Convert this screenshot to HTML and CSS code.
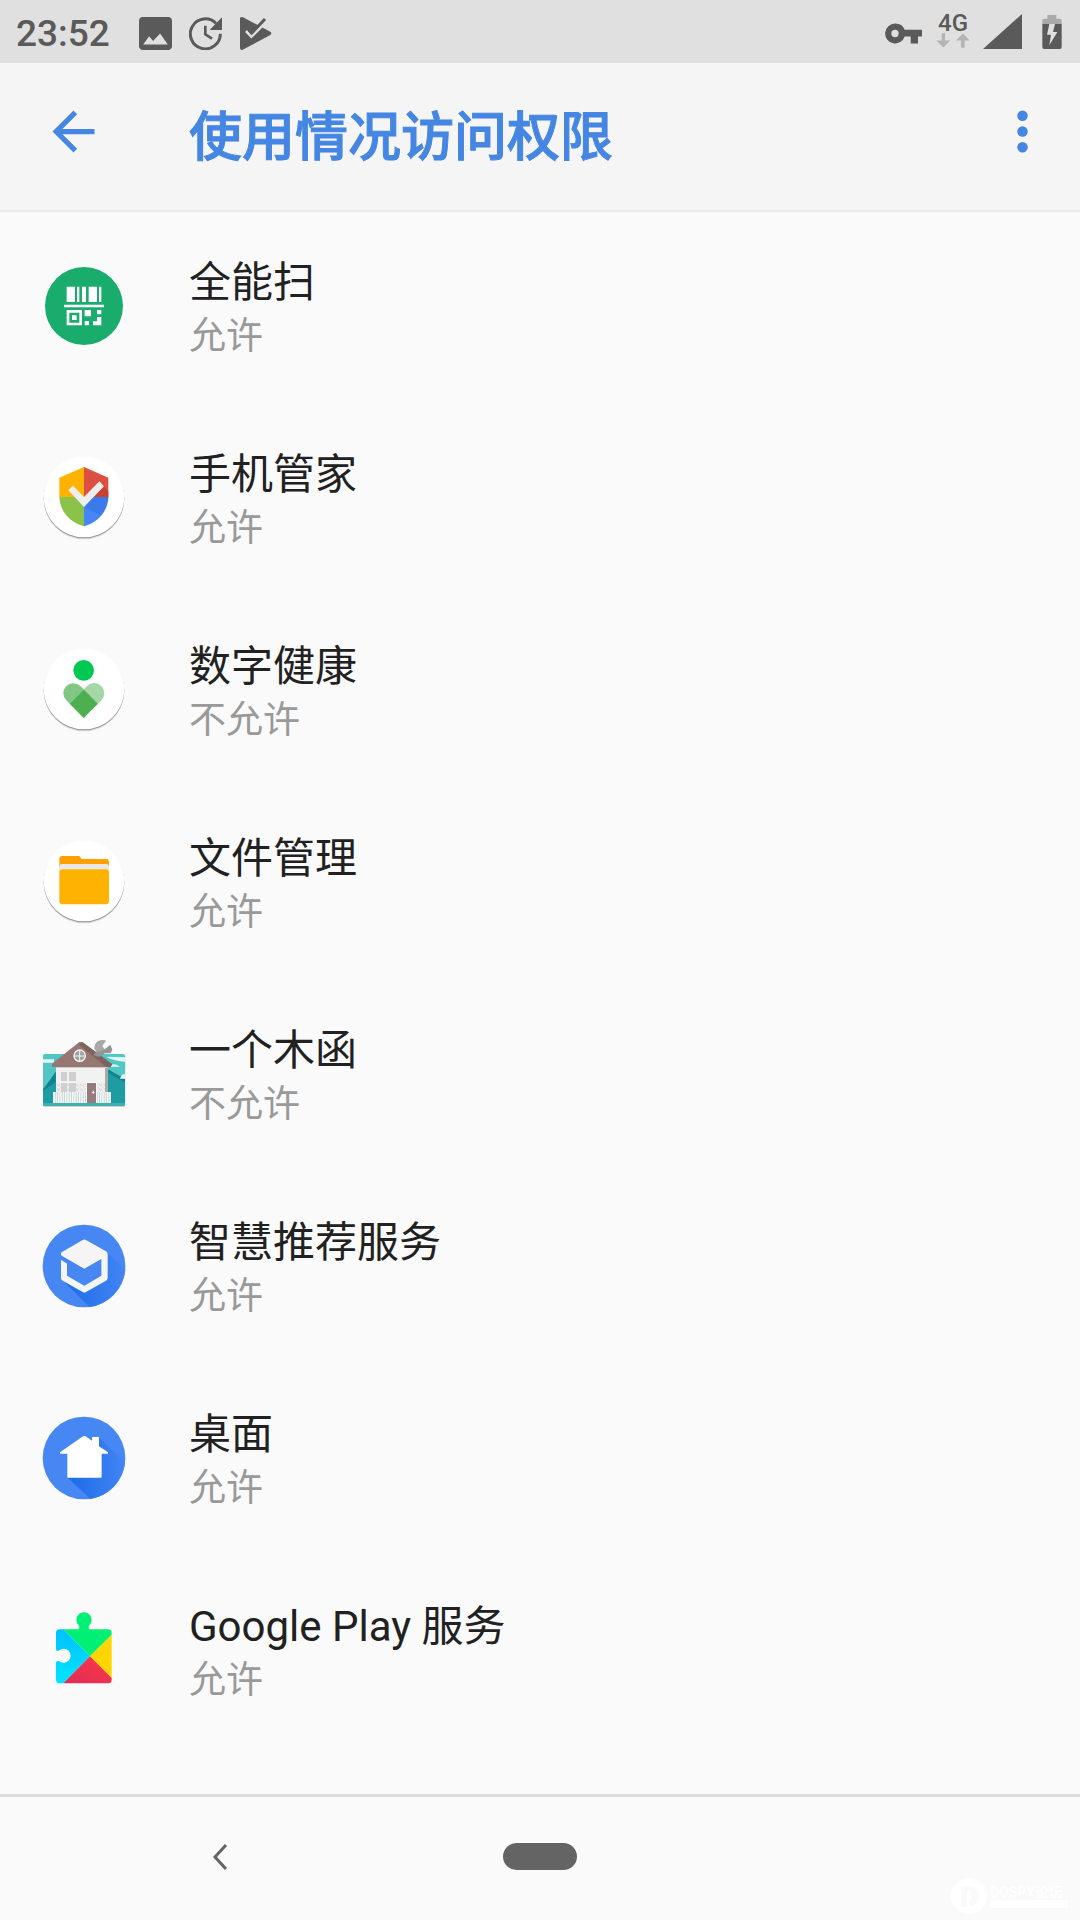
FILE: index.html
```html
<!DOCTYPE html>
<html lang="zh-CN">
<head>
    <meta charset="UTF-8">
    <meta name="viewport" content="width=device-width, initial-scale=1">
    <title>使用情况访问权限</title>
    <link rel="stylesheet" href="styles.css">
</head>
<body>

<div class="status-bar">
    <span class="clock">23:52</span>
    <svg class="status-icon" viewBox="3 3 18 18"><path d="M21 19V5c0-1.100-.9-2-2-2H5c-1.100 0-2 .9-2 2v14c0 1.100.9 2 2 2h14c1.100 0 2-.9 2-2zM5.300 18l3.200-4.500 2.200 2.600 3.800-4.100 4.200 6z"/></svg>
    <svg class="status-icon" viewBox="567 51 99 99"><path d="M648 70A45 45 0 1 0 661 101" fill="none" stroke="#5a5a5a" stroke-width="9"/><path d="M666 52v38h-37z"/><path d="M616 77v26l20 13" fill="none" stroke="#5a5a5a" stroke-width="8"/></svg>
    <svg class="status-icon" viewBox="720 51 99 99"><path d="M723 57q0-9 9-5l82 43q6 5 0 10l-80 43q-11 5-11-5z"/><path d="M741 93l16 17 50-50" fill="none" stroke="#e0e0e0" stroke-width="8"/><path d="M749 89l9 10 40-42" fill="none" stroke="#5a5a5a" stroke-width="9"/></svg>

    <svg class="key" viewBox="75 62 111 62"><path fill-rule="evenodd" d="M105 63a30 30 0 1 0 29 39h18v21h22v-21h12V82h-52a30 30 0 0 0-29-19zm0 19a11 11 0 1 1 0 22 11 11 0 0 1 0-22z"/></svg>
    <span class="network">
        <span class="network-type">4G</span>
        <svg class="network-arrows" viewBox="228 100 102 44"><path d="M245 100h10v22h16l-21 21-21-21h16zM303 144h11v-22h15l-20-21-21 21h15z"/></svg>
    </span>
    <svg class="signal" viewBox="0 0 39 35"><path d="M39 0v35H0z"/></svg>
    <svg class="battery" viewBox="548 42 60 102"><path class="battery-top" d="M564 42h27v11h11q5 0 5 5v12h-58V58q0-5 5-5h10z"/><path d="M549 69h58v69q0 6-6 6h-46q-6 0-6-6z"/><path class="bolt" d="M570 69h17l-6 24h13l-24 40 5-32h-12z"/></svg>
</div>

<header class="app-bar">
    <button class="icon-btn" aria-label="返回">
        <svg viewBox="0 0 24 24"><path d="M20 11H7.800l5.600-5.600L12 4l-8 8 8 8 1.400-1.400L7.800 13H20z"/></svg>
    </button>
    <h1>使用情况访问权限</h1>
    <button class="icon-btn" aria-label="更多选项">
        <svg viewBox="0 0 24 24"><circle cx="12" cy="6" r="2"/><circle cx="12" cy="12" r="2"/><circle cx="12" cy="18" r="2"/></svg>
    </button>
</header>

<main>
    <ul class="app-list">
        <li><a class="app" href="#">
            <svg class="app-icon" viewBox="36 72 252 252">
                <circle cx="162" cy="198" r="117" fill="#1aac6d"/>
                <g fill="#fff">
                    <path d="M110 140h25v46h-25zM141 140h7v46h-7zM156 140h12v46h-12zM176 140h25v46h-25zM207 140h7v46h-7zM102 194h120v8H102z"/>
                    <path fill-rule="evenodd" d="M110 210h46v46h-46zm8 8v30h30v-30z"/>
                    <path d="M126 226h14v14h-14zM164 210h19v19h-19zM201 210h13v13h-13zM164 243h13v13h-13zM201 231h13v25h-25v-12h12z"/>
                </g>
            </svg>
            <span class="app-text"><span class="app-name">全能扫</span><span class="app-state">允许</span></span>
        </a></li>
        <li><a class="app" href="#">
            <svg class="app-icon" viewBox="36 48 252 252">
                <circle class="disc" cx="162" cy="171" r="121"/>
                <path d="M162 81v90H88v-58z" fill="#ffb300"/>
                <path d="M162 81l73 32v58h-73z" fill="#dd4f40"/>
                <path d="M88 171h74v88c-43-12-72-45-74-88z" fill="#8bc34a"/>
                <path d="M162 171h73c-2 43-30 76-73 88z" fill="#4785f4"/>
                <path d="M221 139l14 14v18h-45z" fill="#c9402f"/>
                <path d="M190 171h45c-2 22-10 40-23 55l-50-25z" fill="#3b7aea"/>
                <path d="M115 151l14-14 33 34 46-47 14 15-60 62z" fill="#eee"/>
            </svg>
            <span class="app-text"><span class="app-name">手机管家</span><span class="app-state">允许</span></span>
        </a></li>
        <li><a class="app" href="#">
            <svg class="app-icon" viewBox="36 54 252 252">
                <circle class="disc" cx="162" cy="177" r="121"/>
                <circle cx="161" cy="121" r="31" fill="#00c853"/>
                <path d="M161 178l-42 43-10-10a30 30 0 0 1 42-43z" fill="#81c784"/>
                <path d="M161 178l43 43 10-10a30 30 0 0 0-43-43z" fill="#a5d6a7"/>
                <path d="M161 178l43 43-43 43-42-43z" fill="#4caf50"/>
            </svg>
            <span class="app-text"><span class="app-name">数字健康</span><span class="app-state">不允许</span></span>
        </a></li>
        <li><a class="app" href="#">
            <svg class="app-icon" viewBox="36 60 252 252">
                <circle class="disc" cx="162" cy="183" r="121"/>
                <path d="M88 145v-28q0-9 9-9h49q4 0 9 9h73q9 0 9 9v19z" fill="#ffa000"/>
                <path d="M88 160v-19q0-9 9-9h131q9 0 9 9v19z" fill="#e8e8e8"/>
                <rect x="88" y="148" width="149" height="105" rx="9" fill="#ffb300"/>
            </svg>
            <span class="app-text"><span class="app-name">文件管理</span><span class="app-state">允许</span></span>
        </a></li>
        <li><a class="app" href="#">
            <svg class="app-icon" viewBox="36 36 252 252">
                <defs>
                    <pattern id="stone" width="14" height="14" patternUnits="userSpaceOnUse"><path d="M0 0h4v3H0zM7 4h4v3H7zM2 9h3v4H2zM10 10h4v3h-4z" fill="#ccc"/></pattern>
                    <pattern id="fence" width="7" height="40" patternUnits="userSpaceOnUse"><path d="M0 0h4v40H0z" fill="#fafafa"/></pattern>
                </defs>
                <rect x="39" y="105" width="247" height="156" rx="5" fill="#cfcfcf"/>
                <rect x="39" y="102" width="246" height="156" rx="5" fill="#52c6c5"/>
                <path d="M39 212l35-54 60-50 55 50 50-9 46 38v62H39z" fill="#1e9ba3"/>
                <path d="M39 208l38-50v28l-38 26zM235 149l50 27v11l-50-29z" fill="#12808f"/>
                <path d="M39 118h33v10H39zM228 110l57 2v13q-32-2-57-15zM240 132q18-2 30 8h-30zM270 176q4-13 15-15v15z" fill="#dff8f8"/>
                <path d="M39 249h246v4q0 5-5 5H44q-5 0-5-5z" fill="#3fb0af"/>
                <path d="M78 138h155v111H78z" fill="#f2f2f2"/>
                <path d="M225 138h9v111h-9z" fill="#a9a9a9"/>
                <path d="M78 190h147v59H78z" fill="url(#stone)"/>
                <path d="M93 156h18v27H93zM117 156h21v27h-21zM93 189h18v27H93zM117 189h21v27h-21z" fill="#cfcfcf"/>
                <path d="M78 138h155v6H78z" fill="#ccc"/>
                <path d="M148 66h9l90 67-6 8H66v-10z" fill="#957873"/>
                <path d="M157 66l90 67-6 8h-12l-81-66z" fill="#80635e"/>
                <path d="M190 104q8 6 20 6l14-10h18l5-11-6-15-17 14-9-9 12-17q-22-6-31 11-6 14 4 22z" fill="#949494"/>
                <path d="M205 67q11-9 23-5l-12 16 8 10-17 8-12-6q-6-13 10-23z" fill="#a8a8a8"/>
                <circle cx="149" cy="107" r="17" fill="#a39f9f" stroke="#f5f5f5" stroke-width="4"/>
                <path d="M149 91v33M132 108h34" stroke="#f5f5f5" stroke-width="3"/>
                <path d="M69 216h99v33H69zM201 216h42v33h-42z" fill="#c3d5d4"/>
                <path d="M69 216h99v33H69zM201 216h42v33h-42z" fill="url(#fence)"/>
                <path d="M168 186h32v63h-32z" fill="#fff"/>
                <path d="M171 189h27v60h-27z" fill="#96797a"/>
                <path d="M190 212v10M185 217h9" stroke="#eee" stroke-width="3"/>
            </svg>
            <span class="app-text"><span class="app-name">一个木函</span><span class="app-state">不允许</span></span>
        </a></li>
        <li><a class="app" href="#">
            <svg class="app-icon" viewBox="36 42 252 252">
                <defs>
                    <linearGradient id="shade"><stop offset="0" stop-color="#1b6be8"/><stop offset="1" stop-color="#4285f4"/></linearGradient>
                </defs>
                <circle cx="162" cy="168" r="124" fill="#4787f4"/>
                <path d="M232 128l54 53a124 124 0 0 1-107 110L97 210z" fill="url(#shade)"/>
                <path d="M111 160l52 16 51-28v50l-51 30-52-30z" fill="#4787f4"/>
                <path fill-rule="evenodd" d="M95 127l63-37q5-3 10 0l60 34q5 3 5 8v72q0 5-5 8l-60 34q-5 3-10 0l-60-34q-5-3-5-8v-55l18 12v36l52 30 51-30v-50l-51 29-68-39q-5-5 0-10z" fill="#f5f5f5"/>
            </svg>
            <span class="app-text"><span class="app-name">智慧推荐服务</span><span class="app-state">允许</span></span>
        </a></li>
        <li><a class="app" href="#">
            <svg class="app-icon" viewBox="36 48 252 252">
                <circle cx="162" cy="174" r="124" fill="#4787f4"/>
                <path d="M207 112l78 77a124 124 0 0 1-103 108l-69-64z" fill="url(#shade)"/>
                <path d="M90 157l69-48q4-2 8 0l19 13v-11h21v28l27 18v4h-19v70q0 2-2 2h-99q-2 0-2-2v-70H90z" fill="#fff"/>
            </svg>
            <span class="app-text"><span class="app-name">桌面</span><span class="app-state">允许</span></span>
        </a></li>
        <li><a class="app" href="#">
            <svg class="app-icon" viewBox="36 54 252 252">
                <defs>
                    <linearGradient id="blue" x1="0" y1="1" x2="0" y2="0"><stop offset="0" stop-color="#00e5ff"/><stop offset="1" stop-color="#00c0ff"/></linearGradient>
                    <linearGradient id="red" x1="1" y1="0" x2="0" y2="1"><stop offset="0" stop-color="#ff3a44"/><stop offset="1" stop-color="#dc2b58"/></linearGradient>
                </defs>
                <path d="M89 118h12l79 81-80 81H89q-11 0-11-11v-50q0-9 10-5a21 21 0 1 0 0-33q-10 6-10-5v-47q0-11 11-11z" fill="url(#blue)"/>
                <path d="M101 118h41q8 0 5-11a23 23 0 1 1 30 0q-4 11 6 11h51q11 0 11 11v5l-65 65z" fill="#00f076"/>
                <path d="M245 134v130l-65-65z" fill="#ffd500"/>
                <path d="M180 199l65 65v5q0 11-11 11H100z" fill="url(#red)"/>
            </svg>
            <span class="app-text"><span class="app-name">Google Play 服务</span><span class="app-state">允许</span></span>
        </a></li>
    </ul>
</main>

<nav class="nav-bar">
    <button class="nav-btn" aria-label="后退"><svg class="nav-back" viewBox="0 0 18 28"><path d="M15 2L4 14l11 12"/></svg></button>
    <button class="nav-btn" aria-label="主屏幕"><span class="nav-pill"></span></button>
    <div class="forum-mark">
        <svg class="forum-logo" viewBox="0 0 36 36"><circle cx="18" cy="18" r="18" fill="#fff"/><path d="M10 8h8a10 10 0 0 1 0 20v-6a5 5 0 0 0 0-9h-2v16h-6z" fill="#fafafa"/></svg>
        <span class="forum-text">DOSPY论坛<span class="forum-line"></span></span>
    </div>
</nav>

</body>
</html>
```
FILE: styles.css
```css
* {
    box-sizing: border-box;
}

body {
    margin: 0;
    min-height: 100vh;
    display: flex;
    flex-direction: column;
    background: #fafafa;
    color: #212121;
    font-family: Roboto, "Noto Sans CJK SC", sans-serif;
}

svg {
    display: block;
    flex: none;
}

button {
    padding: 0;
    border: none;
    background: none;
    cursor: pointer;
}

/* status bar */
.status-bar {
    display: flex;
    align-items: center;
    height: 63px;
    padding: 4px 18px 0 16px;
    background: #e0e0e0;
    color: #5a5a5a;
    fill: #5a5a5a;
}

.clock {
    font-size: 37px;
    font-weight: 500;
    line-height: 40px;
    margin-right: 12px;
}

.status-icon {
    width: 33px;
    height: 33px;
    margin-left: 17px;
}

.key {
    width: 37px;
    height: 21px;
    margin-left: auto;
}

.network {
    display: flex;
    flex-direction: column;
    align-items: center;
    width: 34px;
    margin: 0 13px 0 14px;
    padding-bottom: 6px;
}

.network-type {
    font-size: 24px;
    font-weight: 500;
    line-height: 20px;
}

.network-arrows {
    width: 34px;
    height: 15px;
    fill: #b4b4b4;
}

.signal {
    width: 39px;
    height: 35px;
    margin: 0 20px 4px 0;
}

.battery {
    width: 20px;
    height: 34px;
    margin-bottom: 4px;
}

.battery-top {
    fill: #aaa;
}

.bolt {
    fill: #e0e0e0;
}

/* app bar */
.app-bar {
    display: flex;
    align-items: center;
    height: 147px;
    padding: 0 26px 10px 42px;
    background: #f5f5f5;
    box-shadow: 0 2px 0 #ebebeb;
    color: #4586e3;
}

.app-bar h1 {
    flex: 1;
    margin: 0 0 0 84px;
    padding-top: 12px;
    font-size: 53px;
    font-weight: 500;
    line-height: 64px;
    -webkit-text-stroke: 1px #4586e3;
}

.icon-btn svg {
    width: 63px;
    height: 63px;
    fill: #4586e3;
}

/* app list */
main {
    flex: 1;
}

.app-list {
    margin: 0;
    padding: 0;
    list-style: none;
}

.app {
    display: flex;
    align-items: center;
    gap: 63px;
    height: 192px;
    padding: 0 42px;
    color: inherit;
    text-decoration: none;
}

.app-icon {
    width: 84px;
    height: 84px;
}

.app-text {
    display: flex;
    flex-direction: column;
    padding-top: 6px;
}

.app-name {
    font-size: 42px;
    line-height: 56px;
}

.app-state {
    font-size: 37px;
    line-height: 52px;
    color: #999;
}

.disc {
    fill: #fff;
    filter: drop-shadow(0 4px 2px rgba(0, 0, 0, 0.4));
}

/* navigation bar */
.nav-bar {
    position: relative;
    display: grid;
    grid-template-columns: repeat(3, 1fr);
    height: 126px;
    padding: 0 60px 4px;
    border-top: 3px solid #dcdcdc;
}

.nav-btn {
    display: flex;
    align-items: center;
    justify-content: center;
}

.nav-back {
    width: 18px;
    height: 28px;
    fill: none;
    stroke: #646464;
    stroke-width: 3;
}

.nav-pill {
    width: 74px;
    height: 27px;
    border-radius: 14px;
    background: #646464;
}

.forum-mark {
    position: absolute;
    right: 12px;
    bottom: 6px;
    display: flex;
    align-items: center;
    gap: 3px;
    color: #fff;
}

.forum-logo {
    width: 36px;
    height: 36px;
}

.forum-text {
    width: 78px;
    font-size: 14px;
    font-weight: 500;
    line-height: 16px;
    white-space: nowrap;
}

.forum-line {
    display: block;
    height: 8px;
    background: #fff;
}
```
